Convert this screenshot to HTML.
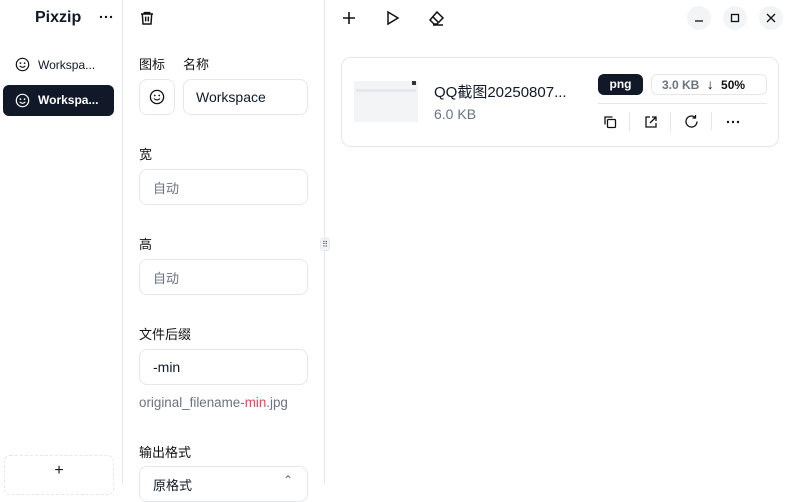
<!DOCTYPE html>
<html><head><meta charset="utf-8"><style>
*{box-sizing:border-box;margin:0;padding:0}
body{width:788px;height:484px;overflow:hidden;background:#fff;font-family:"Liberation Sans","Noto Sans CJK SC",sans-serif;color:#111827;position:relative}
.abs{position:absolute}
.side{left:0;top:0;width:123px;height:484px;border-right:1px solid #e5e7eb}
.mid{left:123px;top:0;width:202px;height:484px;border-right:1px solid #e5e7eb}
.inp{position:absolute;border:1px solid #e5e7eb;border-radius:8px;background:#fff;font-size:14px;display:flex;align-items:center;padding-left:13px}
.lbl{position:absolute;font-size:13px;color:#111}
.ph{color:#6b7280}
svg{display:block}
.wb{position:absolute;top:6px;width:24px;height:24px;border-radius:50%;background:#f3f4f6;display:flex;align-items:center;justify-content:center}
</style></head><body>
<svg width="0" height="0" style="position:absolute"><defs><symbol id="sm" viewBox="0 0 16 16"><circle cx="8" cy="8" r="6.6" fill="none" stroke="currentColor" stroke-width="1.3"/><circle cx="5.8" cy="6.5" r="0.9" fill="currentColor"/><circle cx="10.2" cy="6.5" r="0.9" fill="currentColor"/><path d="M5 9.5q3 3 6 0" fill="none" stroke="currentColor" stroke-width="1.2"/></symbol>
<symbol id="dots" viewBox="0 0 14 4"><circle cx="2" cy="2" r="1.2" fill="currentColor"/><circle cx="7" cy="2" r="1.2" fill="currentColor"/><circle cx="12" cy="2" r="1.2" fill="currentColor"/></symbol></defs></svg>
<div class="abs side">
 <div class="abs" style="left:35px;top:9px;font-size:16px;font-weight:bold">Pixzip</div>
 <svg class="abs" style="left:99px;top:15px;color:#111" width="14" height="4"><use href="#dots"/></svg>
 <svg class="abs" style="left:15px;top:57px;color:#111" width="15" height="15"><use href="#sm"/></svg>
 <div class="abs" style="left:38px;top:58px;font-size:12px">Workspa...</div>
 <div class="abs" style="left:3px;top:85px;width:111px;height:31px;background:#111827;border-radius:6px;color:#fff;font-size:12px;font-weight:bold">
  <svg class="abs" style="left:12px;top:8px;color:#fff" width="15" height="15"><use href="#sm"/></svg>
  <div class="abs" style="left:35px;top:8px">Workspa...</div></div>
 <div class="abs" style="left:4px;top:455px;width:110px;height:40px;border:1px dashed #e5e7eb;border-radius:6px;text-align:center;font-size:16px;padding-top:6px">+</div>
</div>
<div class="abs mid">
 <svg class="abs" style="left:16px;top:10px" width="16" height="16" viewBox="0 0 24 24" fill="none" stroke="#111" stroke-width="2.2"><path d="M3 6h18M8 6V4h8v2M5 6l1 15h12l1-15M10 10v7M14 10v7"/></svg>
 <div class="lbl" style="left:16px;top:54px">图标</div>
 <div class="lbl" style="left:60px;top:54px">名称</div>
 <div class="inp" style="left:16px;top:79px;width:36px;height:36px;padding:0;justify-content:center"><svg width="16" height="16" style="color:#111"><use href="#sm"/></svg></div>
 <div class="inp" style="left:60px;top:79px;width:125px;height:36px;padding-left:12px">Workspace</div>
 <div class="lbl" style="left:16px;top:144px">宽</div>
 <div class="inp ph" style="left:16px;top:169px;width:169px;height:36px;font-size:13px">自动</div>
 <div class="lbl" style="left:16px;top:234px">高</div>
 <div class="inp ph" style="left:16px;top:259px;width:169px;height:36px;font-size:13px">自动</div>
 <div class="lbl" style="left:16px;top:324px">文件后缀</div>
 <div class="inp" style="left:16px;top:349px;width:169px;height:36px">-min</div>
 <div class="abs" style="left:16px;top:395px;font-size:13.4px;color:#6b7280">original_filename-<span style="color:#f43f5e">min</span>.jpg</div>
 <div class="lbl" style="left:16px;top:442px">输出格式</div>
 <div class="inp" style="left:16px;top:466px;width:169px;height:36px;font-size:13px;align-items:flex-start;padding-top:8px">原格式<span style="position:absolute;right:14px;top:6px;font-size:12px;color:#666">⌃</span></div>
</div>
<div class="abs" style="left:320px;top:238px;width:10px;height:13px;border:1px solid #e5e7eb;border-radius:3px;background:#f3f4f6;font-size:8px;text-align:center;line-height:11px;color:#444">⠿</div>
<svg class="abs" style="left:342px;top:11px" width="14" height="14" viewBox="0 0 14 14" stroke="#111" stroke-width="1.6"><path d="M7 1v12M1 7h12"/></svg>
<svg class="abs" style="left:385px;top:10px" width="16" height="16" viewBox="0 0 16 16" fill="none" stroke="#111" stroke-width="1.5"><path d="M3 2l10 6-10 6z"/></svg>
<svg class="abs" style="left:428px;top:10px" width="17" height="16" viewBox="0 0 17 16" fill="none" stroke="#111" stroke-width="1.5"><path d="M9 2l6 6-6 6H6L2 10z M5 7l6 6 M5 15h10"/></svg>
<div class="wb" style="left:687px"><svg width="10" height="10"><path d="M1 8h8" stroke="#111" stroke-width="1.3"/></svg></div>
<div class="wb" style="left:723px"><svg width="10" height="10"><rect x="1.5" y="1.5" width="7" height="7" fill="none" stroke="#111" stroke-width="1.3"/></svg></div>
<div class="wb" style="left:759px"><svg width="10" height="10"><path d="M1 1l8 8M9 1l-8 8" stroke="#111" stroke-width="1.3"/></svg></div>
<div class="abs" style="left:341px;top:57px;width:438px;height:90px;border:1px solid #e5e7eb;border-radius:10px">
 <div class="abs" style="left:12px;top:18px;width:64px;height:46px;background:#f3f4f6;border-top:5px solid #fff">
  <div class="abs" style="left:2px;top:8px;width:60px;height:3px;background:#e5e7eb"></div>
  <div class="abs" style="left:58px;top:0;width:4px;height:4px;background:#333"></div>
 </div>
 <div class="abs" style="left:92px;top:23px;font-size:15px">QQ截图20250807...</div>
 <div class="abs" style="left:92px;top:48px;font-size:14px;color:#6b7280">6.0 KB</div>
 <div class="abs" style="left:256px;top:16px;width:45px;height:21px;background:#111827;border-radius:6px;color:#fff;font-size:12px;font-weight:bold;text-align:center;line-height:21px">png</div>
 <div class="abs" style="left:309px;top:16px;width:116px;height:21px;border:1px solid #e5e7eb;border-radius:6px;font-size:12px;line-height:19px;padding-left:10px;color:#6b7280;font-weight:bold">3.0 KB <span style="color:#111;font-weight:normal;margin:0 4px;font-size:14px">↓</span> <span style="color:#111">50%</span></div>
 <div class="abs" style="left:256px;top:45px;width:169px;height:1px;background:#e5e7eb"></div>
 <svg class="abs" style="left:261px;top:57px" width="14" height="14" viewBox="0 0 14 14" fill="none" stroke="#111" stroke-width="1.3"><rect x="4.5" y="4.5" width="8" height="8" rx="1"/><path d="M2 9.5V2h7.5"/></svg>
 <div class="abs" style="left:287px;top:54px;width:1px;height:19px;background:#e5e7eb"></div>
 <svg class="abs" style="left:302px;top:57px" width="14" height="14" viewBox="0 0 14 14" fill="none" stroke="#111" stroke-width="1.3"><path d="M6 2H2v10h10V8M8 2h4v4M12 2L6 8"/></svg>
 <div class="abs" style="left:328px;top:54px;width:1px;height:19px;background:#e5e7eb"></div>
 <svg class="abs" style="left:342px;top:56px" width="15" height="15" viewBox="0 0 15 15" fill="none" stroke="#111" stroke-width="1.3"><path d="M13 7.5A5.5 5.5 0 1 1 11 3.3M11.5 1v3h-3"/></svg>
 <div class="abs" style="left:369px;top:54px;width:1px;height:19px;background:#e5e7eb"></div>
 <svg class="abs" style="left:384px;top:62px;color:#111" width="14" height="4"><use href="#dots"/></svg>
</div>
</body></html>
